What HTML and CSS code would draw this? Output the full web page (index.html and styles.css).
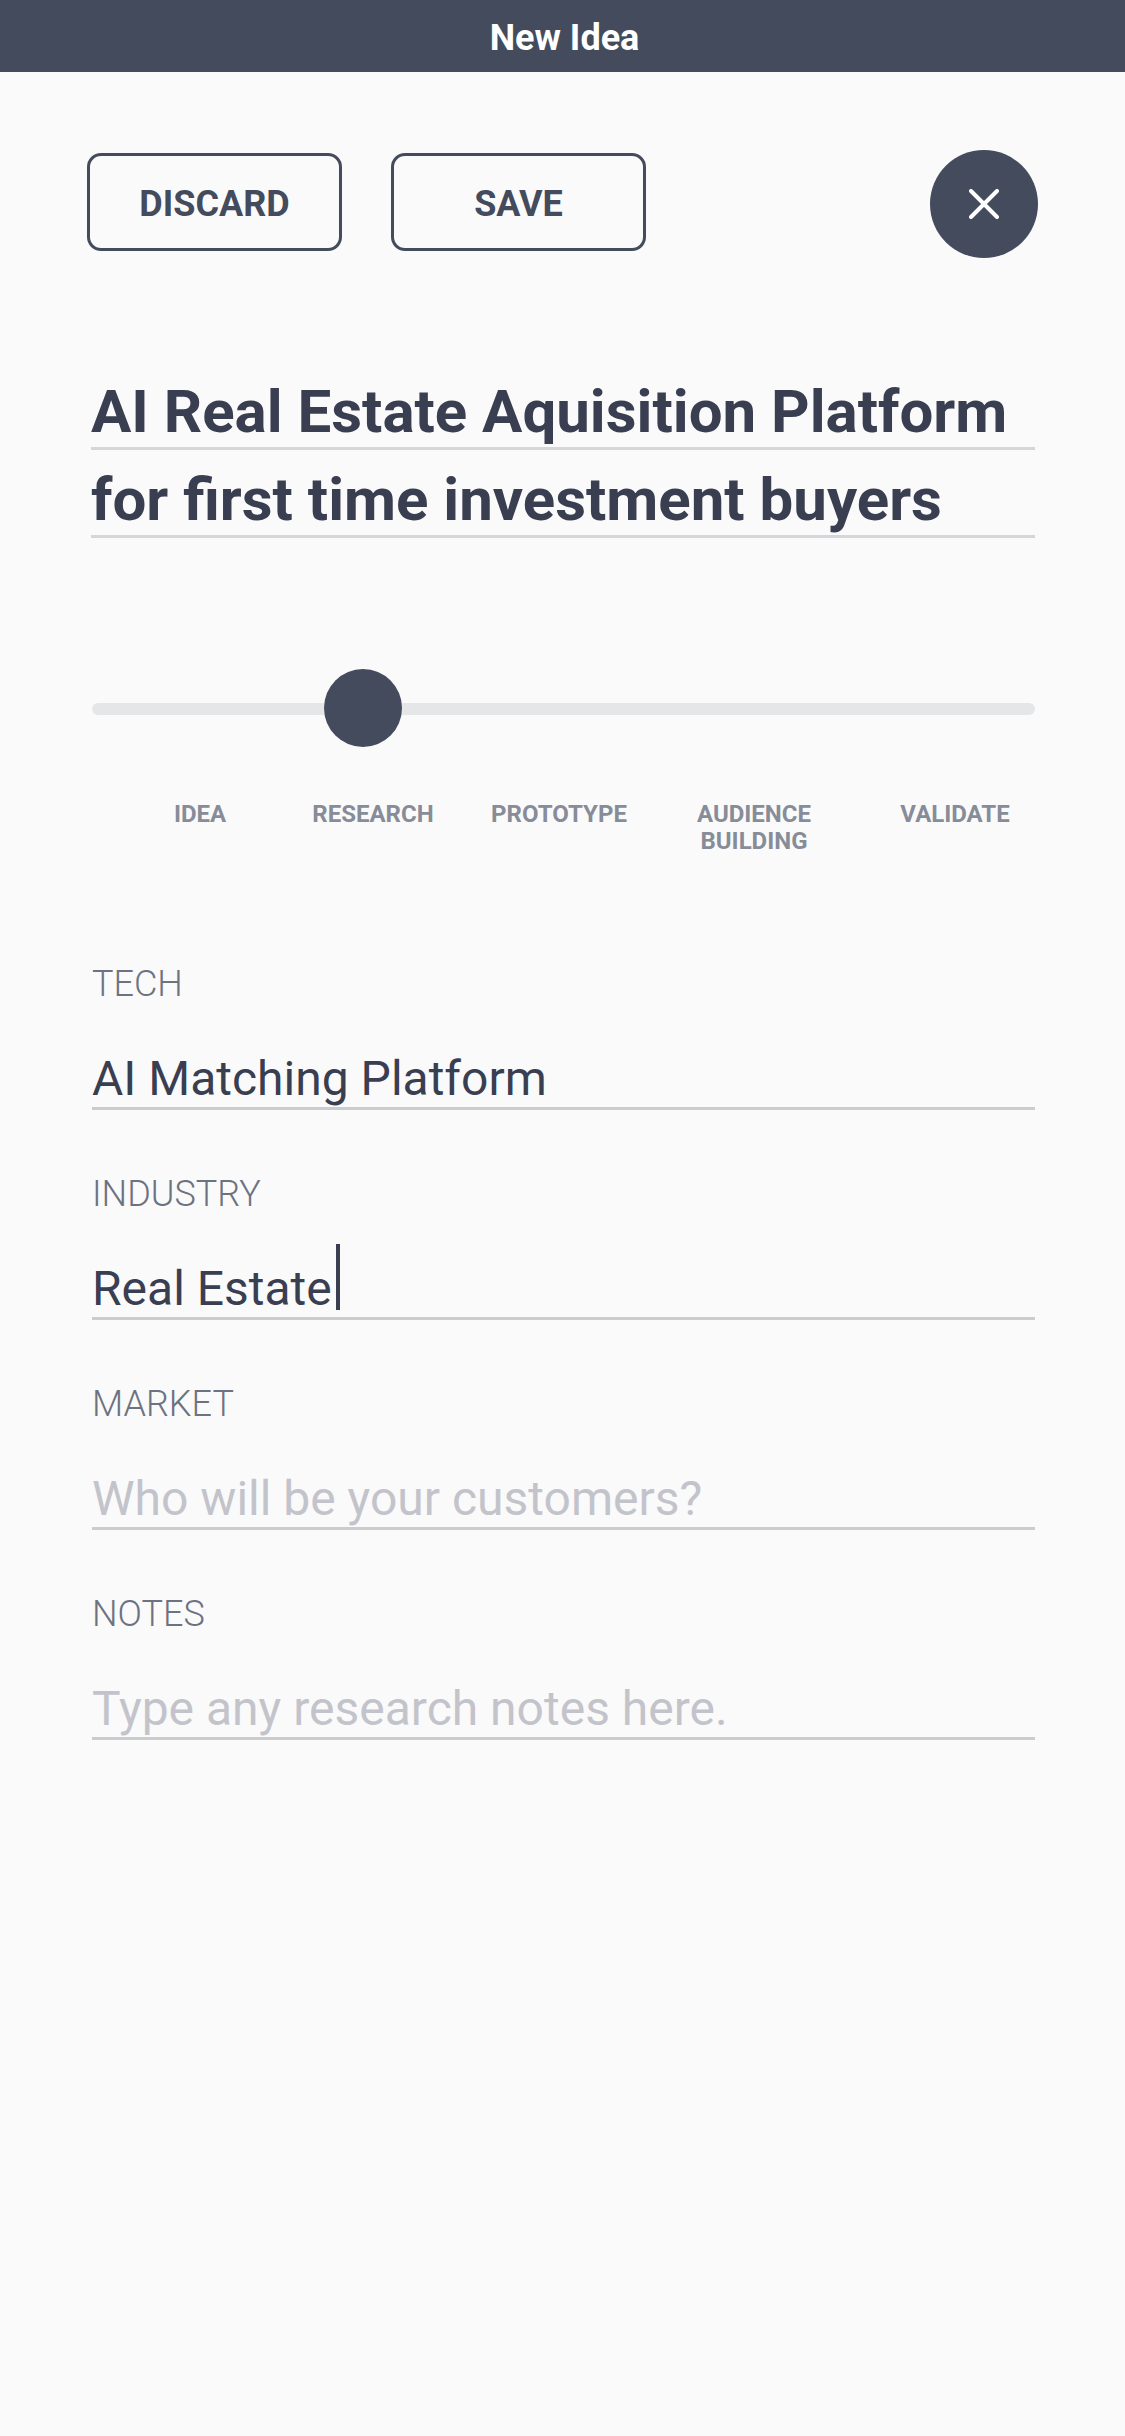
FILE: index.html
```html
<!DOCTYPE html>
<html lang="en">
<head>
<meta charset="utf-8">
<title>New Idea</title>
<link rel="stylesheet" href="styles.css">
</head>
<body>
<header class="topbar">
  <h1 class="topbar-title">New Idea</h1>
</header>
<div class="actions">
  <button class="btn">DISCARD</button>
  <button class="btn">SAVE</button>
  <button class="close" aria-label="Close">
    <svg width="30" height="30" viewBox="0 0 30 30" aria-hidden="true">
      <path d="M2 2 L28 28 M28 2 L2 28" stroke="#ffffff" stroke-width="4" stroke-linecap="round" fill="none"/>
    </svg>
  </button>
</div>
<main class="content">
  <div class="idea-title">
    <div class="title-line">AI Real Estate Aquisition Platform</div>
    <div class="title-line">for first time investment buyers</div>
  </div>
  <div class="stage-slider">
    <div class="track"></div>
    <div class="thumb"></div>
  </div>
  <div class="stages">
    <span class="stage">IDEA</span>
    <span class="stage">RESEARCH</span>
    <span class="stage">PROTOTYPE</span>
    <span class="stage">AUDIENCE<br>BUILDING</span>
    <span class="stage">VALIDATE</span>
  </div>
  <div class="fields">
    <div class="field">
      <div class="field-label">TECH</div>
      <div class="field-value">AI Matching Platform</div>
    </div>
    <div class="field">
      <div class="field-label">INDUSTRY</div>
      <div class="field-value">Real Estate<span class="caret"></span></div>
    </div>
    <div class="field">
      <div class="field-label">MARKET</div>
      <div class="field-value placeholder">Who will be your customers?</div>
    </div>
    <div class="field">
      <div class="field-label">NOTES</div>
      <div class="field-value placeholder">Type any research notes here.</div>
    </div>
  </div>
</main>
</body>
</html>
```

FILE: styles.css
```css
html, body {
  margin: 0;
  padding: 0;
}
body {
  background: #fafafa;
  font-family: Roboto, "Liberation Sans", Arial, sans-serif;
  color: #3a3e51;
  min-height: 2436px;
}
.topbar {
  height: 72px;
  background: #434b5c;
  display: flex;
  align-items: center;
  justify-content: center;
}
.topbar-title {
  margin: 0;
  color: #ffffff;
  font-size: 36px;
  font-weight: 700;
  line-height: 1;
  padding-top: 4px;
  padding-left: 4px;
}
.actions {
  display: flex;
  align-items: center;
  gap: 49px;
  padding: 0 87px;
  margin-top: 78px;
  height: 108px;
}
.btn {
  width: 255px;
  height: 98px;
  box-sizing: border-box;
  border: 3px solid #434b5c;
  border-radius: 14px;
  background: transparent;
  color: #434b5c;
  font-family: Roboto, "Liberation Sans", Arial, sans-serif;
  font-size: 36px;
  font-weight: 700;
  padding: 3px 0 0;
  margin-top: -4px;
}
.close {
  margin-left: auto;
  width: 108px;
  height: 108px;
  border-radius: 50%;
  border: none;
  background: #434b5c;
  display: flex;
  align-items: center;
  justify-content: center;
  padding: 0;
}
.content {
  padding: 0 90px 0 92px;
}
.idea-title {
  margin-top: 104px;
  margin-left: -1px;
}
.title-line {
  font-size: 60px;
  font-weight: 700;
  line-height: 70px;
  padding-top: 15px;
  border-bottom: 3px solid #d5d6da;
  color: #3a3e51;
  white-space: nowrap;
}
.stage-slider {
  position: relative;
  height: 78px;
  margin-top: 131px;
  display: flex;
  align-items: center;
}
.track {
  flex: 1;
  height: 12px;
  margin-top: 2px;
  border-radius: 6px;
  background: #e5e6e8;
}
.thumb {
  position: absolute;
  top: 0;
  left: 232px;
  width: 78px;
  height: 78px;
  border-radius: 50%;
  background: #434b5c;
}
.stages {
  display: grid;
  grid-template-columns: 164px 182px 190px 200px 202px;
  margin-top: 54px;
  margin-left: 26px;
}
.stage {
  text-align: center;
  font-size: 24px;
  font-weight: 700;
  line-height: 27px;
  color: #878c99;
}
.fields {
  margin-top: 109px;
}
.field + .field {
  margin-top: 64px;
}
.field-label {
  font-size: 36px;
  font-weight: 300;
  line-height: 40px;
  color: #6d7281;
}
.field-value {
  margin-top: 47px;
  font-size: 48px;
  font-weight: 400;
  line-height: 56px;
  border-bottom: 3px solid #cbccd0;
  color: #3a3e51;
  white-space: nowrap;
}
.field-value.placeholder {
  color: #c3c4cb;
}
.caret {
  display: inline-block;
  width: 4px;
  height: 66px;
  margin-top: -17px;
  margin-left: 4px;
  vertical-align: -5px;
  background: #3a3e51;
}
```
